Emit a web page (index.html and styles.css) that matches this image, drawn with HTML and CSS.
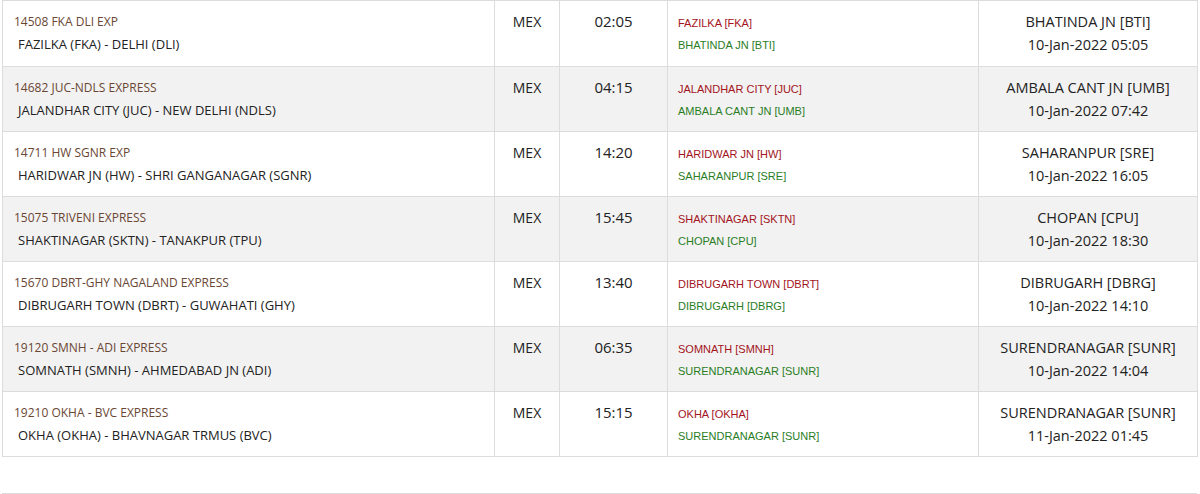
FILE: index.html
```html
<!DOCTYPE html>
<html>
<head>
<meta charset="utf-8">
<link rel="stylesheet" href="styles.css">
</head>
<body>
<div class="wrap">
<table class="trains">
<colgroup>
<col class="c-train"><col class="c-type"><col class="c-dur"><col class="c-route"><col class="c-arr">
</colgroup>
<tbody>
<tr>
<td><div class="tname">14508 FKA DLI EXP</div><div class="troute">FAZILKA (FKA) - DELHI (DLI)</div></td>
<td class="type">MEX</td><td class="dur">02:05</td>
<td class="rt"><div class="from">FAZILKA [FKA]</div><div class="to">BHATINDA JN [BTI]</div></td>
<td class="arr"><div>BHATINDA JN [BTI]</div><div>10-Jan-2022 05:05</div></td>
</tr>
<tr>
<td><div class="tname">14682 JUC-NDLS EXPRESS</div><div class="troute">JALANDHAR CITY (JUC) - NEW DELHI (NDLS)</div></td>
<td class="type">MEX</td><td class="dur">04:15</td>
<td class="rt"><div class="from">JALANDHAR CITY [JUC]</div><div class="to">AMBALA CANT JN [UMB]</div></td>
<td class="arr"><div>AMBALA CANT JN [UMB]</div><div>10-Jan-2022 07:42</div></td>
</tr>
<tr>
<td><div class="tname">14711 HW SGNR EXP</div><div class="troute">HARIDWAR JN (HW) - SHRI GANGANAGAR (SGNR)</div></td>
<td class="type">MEX</td><td class="dur">14:20</td>
<td class="rt"><div class="from">HARIDWAR JN [HW]</div><div class="to">SAHARANPUR [SRE]</div></td>
<td class="arr"><div>SAHARANPUR [SRE]</div><div>10-Jan-2022 16:05</div></td>
</tr>
<tr>
<td><div class="tname">15075 TRIVENI EXPRESS</div><div class="troute">SHAKTINAGAR (SKTN) - TANAKPUR (TPU)</div></td>
<td class="type">MEX</td><td class="dur">15:45</td>
<td class="rt"><div class="from">SHAKTINAGAR [SKTN]</div><div class="to">CHOPAN [CPU]</div></td>
<td class="arr"><div>CHOPAN [CPU]</div><div>10-Jan-2022 18:30</div></td>
</tr>
<tr>
<td><div class="tname">15670 DBRT-GHY NAGALAND EXPRESS</div><div class="troute">DIBRUGARH TOWN (DBRT) - GUWAHATI (GHY)</div></td>
<td class="type">MEX</td><td class="dur">13:40</td>
<td class="rt"><div class="from">DIBRUGARH TOWN [DBRT]</div><div class="to">DIBRUGARH [DBRG]</div></td>
<td class="arr"><div>DIBRUGARH [DBRG]</div><div>10-Jan-2022 14:10</div></td>
</tr>
<tr>
<td><div class="tname">19120 SMNH - ADI EXPRESS</div><div class="troute">SOMNATH (SMNH) - AHMEDABAD JN (ADI)</div></td>
<td class="type">MEX</td><td class="dur">06:35</td>
<td class="rt"><div class="from">SOMNATH [SMNH]</div><div class="to">SURENDRANAGAR [SUNR]</div></td>
<td class="arr"><div>SURENDRANAGAR [SUNR]</div><div>10-Jan-2022 14:04</div></td>
</tr>
<tr>
<td><div class="tname">19210 OKHA - BVC EXPRESS</div><div class="troute">OKHA (OKHA) - BHAVNAGAR TRMUS (BVC)</div></td>
<td class="type">MEX</td><td class="dur">15:15</td>
<td class="rt"><div class="from">OKHA [OKHA]</div><div class="to">SURENDRANAGAR [SUNR]</div></td>
<td class="arr"><div>SURENDRANAGAR [SUNR]</div><div>11-Jan-2022 01:45</div></td>
</tr>
</tbody>
</table>
<div class="next"></div>
</div>
</body>
</html>
```
FILE: styles.css
```css
html, body {
  margin: 0;
  padding: 0;
  background: #fff;
}
body {
  font-family: "Open Sans", "DejaVu Sans", sans-serif;
  color: #222;
}
.wrap {
  padding: 0 4px 0 2px;
}
.trains {
  width: 1195px;
  border-collapse: collapse;
  table-layout: fixed;
}
.c-train { width: 492px; }
.c-type { width: 65px; }
.c-dur { width: 108px; }
.c-route { width: 311px; }
.c-arr { width: 219px; }
.trains td {
  border: 1px solid #dcdcdc;
  height: 65px;
  box-sizing: border-box;
  vertical-align: top;
  padding: 10px 10px 0 10px;
}
.trains tr:first-child td {
  height: 66px;
}
.trains tr:nth-child(even) td {
  background: #f2f2f2;
}
.tname {
  font-size: 12px;
  line-height: 21px;
  color: #6a4633;
  padding-left: 1px;
}
.troute {
  font-size: 13px;
  line-height: 24px;
  color: #222;
  padding-left: 5px;
}
.type {
  text-align: center;
  font-size: 14px;
  line-height: 21px;
}
.dur {
  text-align: center;
  font-size: 15px;
  line-height: 21px;
}
.trains td.rt { padding-top: 11px; }
.from, .to {
  font-family: "Liberation Sans", Arial, sans-serif;
  font-size: 11px;
  line-height: 22px;
}
.from { color: #a3141c; }
.to { color: #2a7d1f; }
.arr {
  text-align: center;
  font-size: 14.5px;
  line-height: 23px;
}
.trains td.arr { padding-top: 9px; }
.next {
  margin-top: 36px;
  border-top: 1px solid #dcdcdc;
  height: 10px;
  width: 1195px;
}
```
